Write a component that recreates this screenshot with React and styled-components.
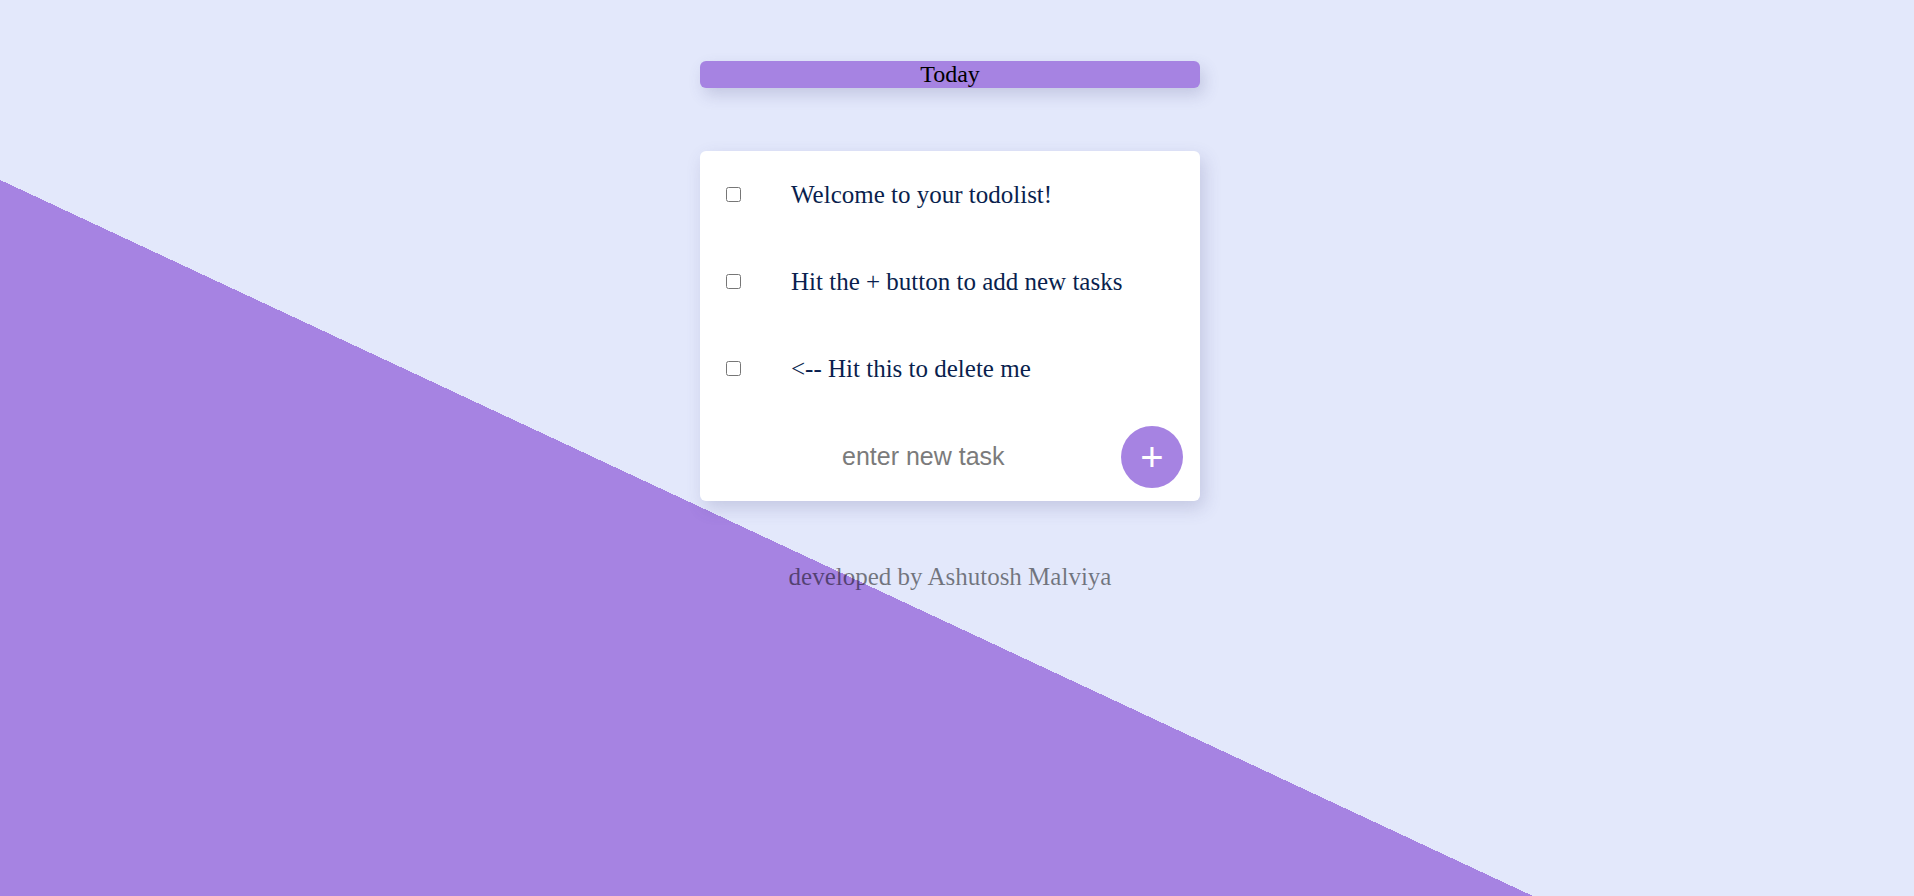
import React, { useState } from 'react';
import styled, { createGlobalStyle } from 'styled-components';

const purple = '#a683e2';
const lavender = '#e3e8fb';

const GlobalStyle = createGlobalStyle`
  html, body {
    margin: 0;
    padding: 0;
    background: ${lavender};
  }
`;

// the diagonal purple slice is a hard-stop gradient on the page itself
const Page = styled.div`
  box-sizing: border-box;
  min-height: 1200px;
  padding: 61px 14px 0 0;
  display: flex;
  flex-direction: column;
  align-items: center;
  font-family: 'Liberation Serif', 'Times New Roman', serif;
  background: linear-gradient(205.04deg, ${lavender} 973.1px, ${purple} 973.1px);
`;

const DayBar = styled.div`
  width: 500px;
  background: ${purple};
  border-radius: 6px;
  text-align: center;
  font-size: 24px;
  color: #000;
  box-shadow: 4px 7px 16px rgba(70, 70, 130, 0.2);
`;

const Card = styled.div`
  width: 500px;
  margin-top: 63px;
  background: #fff;
  border-radius: 6px;
  box-shadow: 4px 7px 18px rgba(70, 70, 130, 0.2);
`;

const TaskRow = styled.div`
  height: 87px;
  display: flex;
  align-items: center;
  padding-left: 26px;
`;

const Check = styled.input`
  width: 15px;
  height: 15px;
  margin: 0;
`;

const TaskText = styled.span`
  margin-left: 50px;
  font-size: 25px;
  color: #0a1f4e;
`;

const AddRow = styled.form`
  height: 89px;
  margin: 0;
  display: flex;
  align-items: center;
  padding: 0 17px 0 142px;
  box-sizing: border-box;
`;

const TaskInput = styled.input`
  flex: 1;
  min-width: 0;
  border: none;
  outline: none;
  padding: 0;
  background: transparent;
  font-family: 'Liberation Sans', Arial, sans-serif;
  font-size: 25px;
  color: #333;
  &::placeholder {
    color: #7b7b7b;
  }
`;

const AddButton = styled.button`
  width: 62px;
  height: 62px;
  flex-shrink: 0;
  border: none;
  border-radius: 50%;
  background: ${purple};
  color: #fff;
  font-family: 'Liberation Sans', Arial, sans-serif;
  font-size: 40px;
  line-height: 62px;
  padding: 0 0 5px;
  cursor: pointer;
`;

const Footer = styled.p`
  margin: 61.5px 0 0;
  font-size: 25px;
  color: rgba(0, 0, 0, 0.5);
`;

const startTasks = [
  'Welcome to your todolist!',
  'Hit the + button to add new tasks',
  '<-- Hit this to delete me',
];

const App = () => {
  const [tasks, setTasks] = useState(startTasks);
  const [draft, setDraft] = useState('');

  const addTask = e => {
    e.preventDefault();
    if (!draft.trim()) return;
    setTasks([...tasks, draft]);
    setDraft('');
  };

  const removeTask = i => {
    setTasks(tasks.filter((_, idx) => idx !== i));
  };

  return (
    <>
      <GlobalStyle />
      <Page>
        <DayBar>Today</DayBar>
        <Card>
          {tasks.map((t, i) => (
            <TaskRow key={t + i}>
              <Check type='checkbox' onChange={() => removeTask(i)} />
              <TaskText>{t}</TaskText>
            </TaskRow>
          ))}
          <AddRow onSubmit={addTask}>
            <TaskInput
              placeholder='enter new task'
              value={draft}
              onChange={e => setDraft(e.target.value)}
            />
            <AddButton type='submit'>+</AddButton>
          </AddRow>
        </Card>
        <Footer>developed by Ashutosh Malviya</Footer>
      </Page>
    </>
  );
};

export default App;
